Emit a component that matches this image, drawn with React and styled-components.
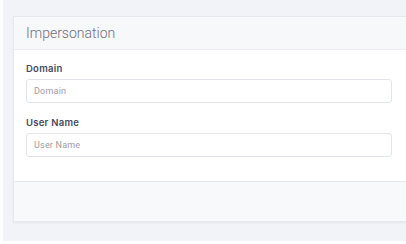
import React from "react";
import styled, { createGlobalStyle } from "styled-components";

const Global = createGlobalStyle`
  html, body {
    margin: 0;
    padding: 0;
    background: #ffffff;
  }
`;

const Page = styled.div`
  margin-left: 3px;
  height: 241px;
  background: #f2f3f8;
  padding: 16px 0 0 10px;
  box-sizing: border-box;
  overflow: hidden;
`;

const Card = styled.div`
  width: 420px;
  background: #ffffff;
  border: 1px solid #e6e8f0;
  box-shadow: 0 1px 2px rgba(80, 90, 120, 0.08);
`;

const Header = styled.div`
  height: 32px;
  display: flex;
  align-items: center;
  padding: 0 12px;
  background: #f7f8fa;
  border-bottom: 1px solid #ebedf3;
  font-family: Roboto, "Liberation Sans", sans-serif;
  font-weight: 300;
  font-size: 14px;
  color: #6e6f78;
`;

const Body = styled.div`
  padding: 12px 12px 24px;
  display: flex;
  flex-direction: column;
`;

const Label = styled.label`
  font-family: Inter, "Liberation Sans", sans-serif;
  font-weight: 600;
  font-size: 9.5px;
  letter-spacing: 0.25px;
  line-height: 14px;
  color: #434a5e;
  margin-bottom: 3px;
  margin-top: ${(p) => (p.$first ? "0" : "13px")};
`;

const Input = styled.input`
  width: 366px;
  height: 24px;
  box-sizing: border-box;
  border: 1px solid #e2e4ec;
  border-radius: 3px;
  padding: 0 7px;
  font-family: Roboto, "Liberation Sans", sans-serif;
  font-size: 9px;
  letter-spacing: 0.2px;
  color: #555;
  outline: none;

  &::placeholder {
    color: #9c9ca4;
  }
`;

const Footer = styled.div`
  height: 39px;
  background: #f8f9fb;
  border-top: 1px solid #e4e6ee;
`;

export default function App() {
  return (
    <>
      <Global />
      <Page>
        <Card>
          <Header>Impersonation</Header>
          <Body>
            <Label $first>Domain</Label>
            <Input placeholder="Domain" />
            <Label>User Name</Label>
            <Input placeholder="User Name" />
          </Body>
          <Footer />
        </Card>
      </Page>
    </>
  );
}
